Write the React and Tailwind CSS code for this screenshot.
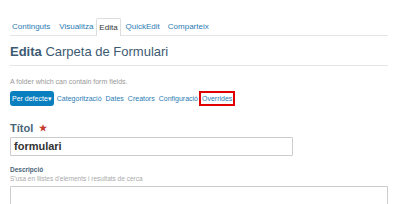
export default function App() {
  const f = { fontFamily: '"Liberation Sans", Arial, sans-serif' };
  return (
    <div className="w-[400px] h-[204px] bg-white overflow-hidden" style={f}>
      <div className="pl-[10px] pr-[12px] pt-[17px]">
        <div className="flex items-end border-b border-[#e5e5e5] h-[19px]">
          <span className="px-[2px] pb-[4px] text-[8px] text-[#2a7cb4] leading-none mr-[5px]">Continguts</span>
          <span className="px-[2px] pb-[4px] text-[8px] text-[#2a7cb4] leading-none mr-[1px]">Visualitza</span>
          <span className="px-[2px] pb-[4px] pt-[5px] text-[8px] text-[#333] leading-none border border-b-0 border-[#ddd] rounded-t-[2px] bg-white -mb-px mr-[3px]">Edita</span>
          <span className="px-[2px] pb-[4px] text-[8px] text-[#2a7cb4] leading-none mr-[4px]">QuickEdit</span>
          <span className="px-[2px] pb-[4px] text-[8px] text-[#2a7cb4] leading-none">Comparteix</span>
        </div>
        <div className="border-b border-[#e5e5e5] h-[30px] flex items-center pt-[1px]">
          <span className="text-[13px] leading-none text-[#3c5a72]"><b>Edita</b> Carpeta de Formulari</span>
        </div>
        <div className="mt-[12px] text-[7px] text-[#999] leading-none">A folder which can contain form fields.</div>
        <div className="mt-[5px] flex items-center h-[16px] text-[7px] leading-none">
          <span className="bg-[#0a7fc0] text-white rounded-[3px] h-[15px] px-[2px] flex items-center">Per defecte▾</span>
          <span className="ml-[3px] text-[#2a7cb4]">Categorització</span>
          <span className="ml-[4px] text-[#2a7cb4]">Dates</span>
          <span className="ml-[4px] text-[#2a7cb4]">Creators</span>
          <span className="ml-[4px] text-[#2a7cb4]">Configuració</span>
          <span className="ml-[1px] text-[#2a7cb4] border-2 border-[#e00000] h-[15px] px-[1px] flex items-center">Overrides</span>
        </div>
        <div className="mt-[17px] flex items-center text-[11px] leading-none font-bold text-[#4a6478]">
          Títol <span className="ml-[6px] text-[#c43a2b] text-[9px]">★</span>
        </div>
        <div className="mt-[3px] w-[283px] h-[19px] border border-[#ccc] rounded-[1px] flex items-center px-[3px] text-[11px] font-bold text-[#333]">formulari</div>
        <div className="mt-[11px] text-[6.5px] font-bold text-[#4a6478] leading-none">Descripció</div>
        <div className="mt-[2px] text-[6.5px] text-[#aaa] leading-none">S'usa en llistes d'elements i resultats de cerca</div>
        <div className="mt-[4px] w-[378px] h-[40px] border border-[#ccc] rounded-[1px]"></div>
      </div>
    </div>
  );
}
